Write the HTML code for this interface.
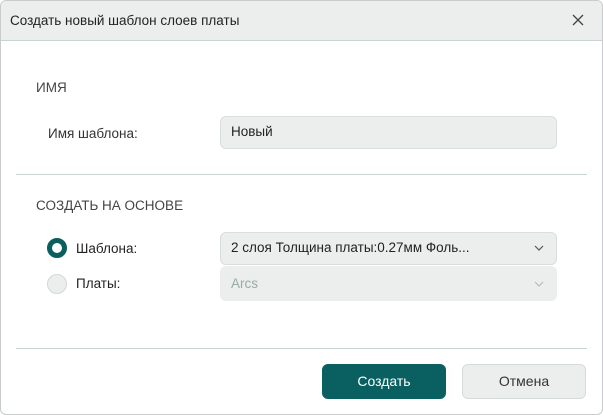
<!DOCTYPE html>
<html><head><meta charset="utf-8"><style>
*{box-sizing:border-box;margin:0;padding:0}
body{width:603px;height:415px;background:#fff;font-family:"Liberation Sans",sans-serif;font-size:13.5px;color:#222;position:relative;overflow:hidden}
.dlg{position:absolute;left:0;top:0;width:603px;height:415px;border:1px solid #c9cccc;border-radius:6px;overflow:hidden;background:#fff}
.hdr{position:absolute;left:0;top:0;right:0;height:40px;background:#eceeed;border-bottom:1px solid #c9d3d3}
.t{position:absolute;white-space:nowrap}
.box{position:absolute;left:219px;width:337px;background:#eceeed;border:1px solid #d8dddd;border-radius:6px;padding-left:10px;line-height:30px}
.hr{position:absolute;left:15px;width:571px;height:1px;background:#c9d3d3}
.btn{position:absolute;top:363px;height:35px;width:124px;border-radius:6px;text-align:center;line-height:35px;font-size:14px}
</style></head><body><div class="dlg">
<div class="hdr"></div>
<div class="t" style="left:9px;top:12px;color:#222">Создать новый шаблон слоев платы</div>
<svg style="position:absolute;left:571px;top:13px" width="12" height="12"><path d="M1 1L11 11M11 1L1 11" stroke="#444" stroke-width="1.3"/></svg>
<div class="t" style="left:35px;top:79px;color:#444">ИМЯ</div>
<div class="t" style="left:47px;top:125px;color:#333">Имя шаблона:</div>
<div class="box" style="top:115px;height:33px">Новый</div>
<div class="hr" style="top:173px"></div>
<div class="t" style="left:35px;top:197px;color:#444">СОЗДАТЬ НА ОСНОВЕ</div>
<div style="position:absolute;left:46px;top:237px;width:20px;height:20px;border-radius:50%;border:5px solid #0a5e5e;background:#fff"></div>
<div class="t" style="left:75px;top:240px">Шаблона:</div>
<div class="box" style="top:231px;height:33px">2 слоя Толщина платы:0.27мм Фоль...</div>
<svg style="position:absolute;left:533px;top:244px" width="10" height="6"><path d="M1 1L5 5L9 1" stroke="#555" fill="none" stroke-width="1.2"/></svg>
<div style="position:absolute;left:46px;top:273px;width:20px;height:20px;border-radius:50%;border:1px solid #d3d8d8;background:#eceeed"></div>
<div class="t" style="left:75px;top:275px">Платы:</div>
<div class="box" style="top:265px;height:35px;border-color:#eceeed;color:#9aa;line-height:34px">Arcs</div>
<svg style="position:absolute;left:533px;top:280px" width="10" height="6"><path d="M1 1L5 5L9 1" stroke="#bbb" fill="none" stroke-width="1.2"/></svg>
<div class="hr" style="top:347px"></div>
<div class="btn" style="left:321px;background:#0a6060;color:#fff">Создать</div>
<div class="btn" style="left:461px;background:#eceeed;border:1px solid #d5dada;color:#333;line-height:33px">Отмена</div>
</div></body></html>
